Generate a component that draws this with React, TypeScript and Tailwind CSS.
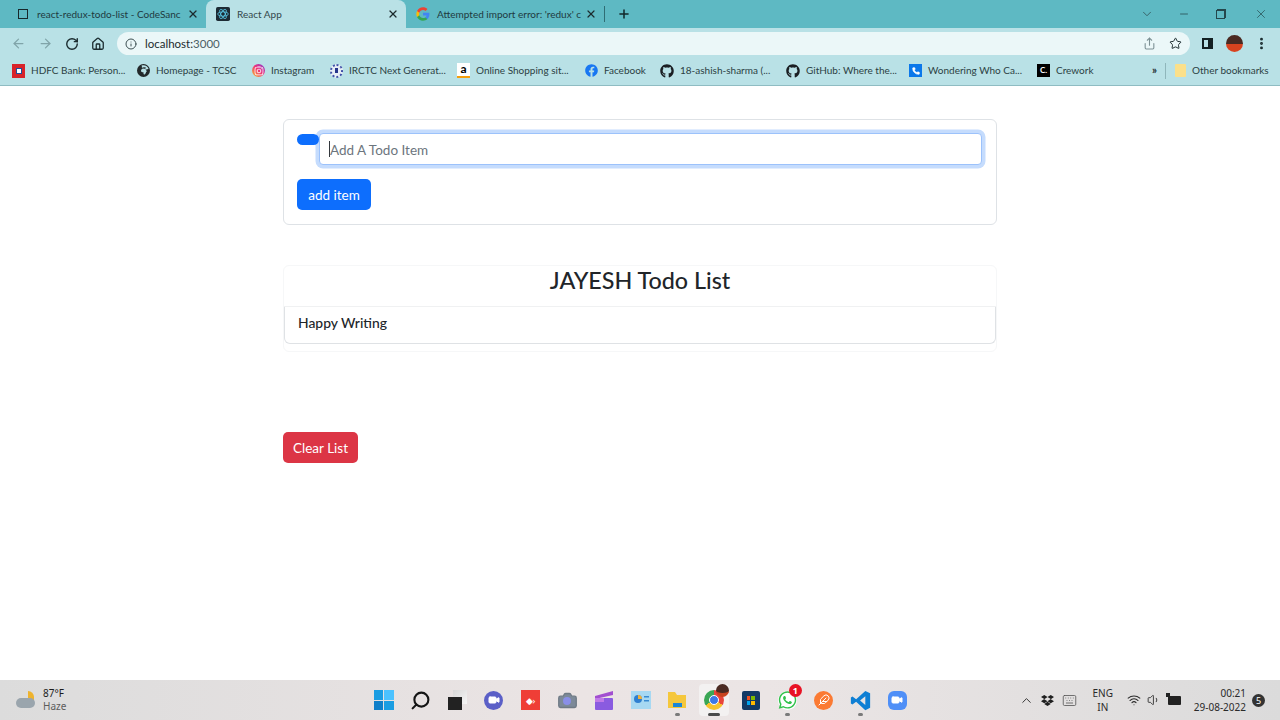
import { ArrowLeft, ArrowRight, ChevronDown, ChevronUp, Info, Minus, Plus, RotateCw, Home, Share, Star, X, Wifi, Volume1, Keyboard, EllipsisVertical, Search, Video, Camera, Phone, Feather } from 'lucide-react';
import { FaDropbox, FaFacebook, FaGithub, FaInstagram, FaWhatsapp } from 'react-icons/fa';
import { FaEarthAfrica } from 'react-icons/fa6';
import type { ReactNode } from 'react';

const chromeFont = "font-['Lato',sans-serif]";
const winFont = "font-['Noto_Sans',sans-serif]";

function ReactFavicon() {
  return (
    <svg viewBox="0 0 16 16" className="w-[14px] h-[14px] shrink-0">
      <rect width="16" height="16" rx="2" fill="#1d2b34" />
      <g fill="none" stroke="#61dafb" strokeWidth="0.8">
        <ellipse cx="8" cy="8" rx="6" ry="2.4" />
        <ellipse cx="8" cy="8" rx="6" ry="2.4" transform="rotate(60 8 8)" />
        <ellipse cx="8" cy="8" rx="6" ry="2.4" transform="rotate(120 8 8)" />
      </g>
    </svg>
  );
}

function GoogleIcon() {
  return (
    <svg viewBox="0 0 24 24" className="w-[14px] h-[14px] shrink-0">
      <path fill="#4285F4" d="M23 12.3c0-.8-.1-1.600-.2-2.300H12v4.400h6.200c-.3 1.400-1.100 2.600-2.300 3.400v2.800h3.700c2.100-2 3.400-4.900 3.400-8.300z" />
      <path fill="#34A853" d="M12 23.500c3.100 0 5.700-1 7.600-2.800l-3.700-2.900c-1 .7-2.300 1.100-3.900 1.100-3 0-5.500-2-6.400-4.700H1.800v2.900c1.900 3.800 5.800 6.400 10.200 6.400z" />
      <path fill="#FBBC05" d="M5.600 14.200c-.5-1.400-.5-3 0-4.400V6.900H1.800c-1.600 3.200-1.600 7 0 10.200z" />
      <path fill="#EA4335" d="M12 5c1.700 0 3.200.6 4.400 1.700l3.300-3.300C17.700 1.500 15.100.5 12 .5 7.600.5 3.700 3.100 1.800 6.900l3.800 2.900C6.500 7 9 5 12 5z" />
    </svg>
  );
}

function Tab({ icon, title, active, width }: { icon: ReactNode; title: string; active?: boolean; width: string }) {
  return (
    <div className={`${width} h-[28px] flex items-center pl-[10px] pr-[7px] gap-[7px] shrink-0 ${active ? 'bg-[#b9e1e6] rounded-t-[8px]' : ''}`}>
      {icon}
      <span className={`flex-1 min-w-0 whitespace-nowrap text-[10px] ${active ? 'text-[#33474b]' : 'text-[#1f3a3f]'}`}>
        {title}
      </span>
      <X className="w-[12px] h-[12px] shrink-0 text-[#1c2b2e]" strokeWidth={2.4} />
    </div>
  );
}

function Bookmark({ icon, label, width }: { icon: ReactNode; label: string; width: string }) {
  return (
    <div className={`${width} flex items-center gap-[6px] shrink-0`}>
      {icon}
      <span className="text-[10px] text-[#2b3f43] whitespace-nowrap">{label}</span>
    </div>
  );
}

function Browser() {
  return (
    <div className={`${chromeFont} shrink-0`}>
      <div className="h-[28px] bg-[#5eb9c3] flex items-center pl-[6px]">
        <Tab
          width="w-[200px]"
          title="react-redux-todo-list - CodeSanc"
          icon={<span className="w-[10px] h-[10px] mx-[2px] border-[1.500px] border-[#17282b] shrink-0" />}
        />
        <Tab width="w-[200px]" active title="React App" icon={<ReactFavicon />} />
        <Tab width="w-[198px]" title="Attempted import error: 'redux' c" icon={<GoogleIcon />} />
        <div className="w-px h-[16px] bg-[#2f6d74]" />
        <Plus className="w-[14px] h-[14px] ml-[12px] text-[#12272a]" strokeWidth={2.6} />
        <div className="flex-1" />
        <ChevronDown className="w-[14px] h-[14px] text-[#34595e] mr-[24px]" strokeWidth={1.5} />
        <Minus className="w-[12px] h-[12px] text-[#24474c] mr-[26px]" strokeWidth={1.5} />
        <span className="w-[9px] h-[9px] border border-[#24474c] mr-[29px] shadow-[1px_-1px_0_#24474c]" />
        <X className="w-[14px] h-[14px] text-[#24474c] mr-[12px]" strokeWidth={1.2} />
      </div>

      <div className="h-[28px] pt-[3px] bg-[#b9e1e6] flex items-center pl-[11px]">
        <ArrowLeft className="w-[15px] h-[15px] text-[#80a4a9]" strokeWidth={2} />
        <ArrowRight className="w-[15px] h-[15px] ml-[12px] text-[#80a4a9]" strokeWidth={2} />
        <RotateCw className="w-[14px] h-[14px] ml-[12px] text-[#1a2b2e]" strokeWidth={2.4} />
        <Home className="w-[14px] h-[14px] ml-[12px] text-[#1a2b2e]" strokeWidth={2.2} />
        <div className="ml-[12px] w-[1073px] h-[23px] bg-[#ebf7f8] rounded-full flex items-center pl-[8px] pr-[8px] gap-[8px] shrink-0">
          <Info className="w-[12px] h-[12px] text-[#3d4f52]" />
          <span className="text-[11.500px] text-[#4c6166] flex-1">
            <span className="text-[#1c2b2e]">localhost:</span>3000
          </span>
          <Share className="w-[13px] h-[13px] text-[#7c9094]" />
          <Star className="w-[13px] h-[13px] ml-[5px] text-[#1c2b2e]" strokeWidth={1.8} />
        </div>
        <span className="ml-[12px] w-[11px] h-[11px] border-[2px] border-[#132023] border-r-[5px] shrink-0" />
        <span className="ml-[13px] w-[17px] h-[17px] rounded-full bg-[linear-gradient(#4a2a22_55%,#d8431f_55%)] shrink-0" />
        <EllipsisVertical className="ml-[11px] w-[15px] h-[15px] text-[#1a2b2e] shrink-0" strokeWidth={2.6} />
      </div>

      <div className="h-[30px] bg-[#b9e1e6] border-b border-[#8fbcc2] flex items-center pl-[12px]">
        <Bookmark
          width="w-[125px]"
          label="HDFC Bank: Person..."
          icon={<span className="w-[13px] h-[14px] bg-[#d8232a] flex items-center justify-center shrink-0"><span className="w-[6px] h-[6px] bg-white border border-[#1f4f9c]" /></span>}
        />
        <Bookmark width="w-[115px]" label="Homepage - TCSC" icon={<FaEarthAfrica className="w-[13px] h-[13px] text-[#23292b] shrink-0" />} />
        <Bookmark
          width="w-[78px]"
          label="Instagram"
          icon={<span className="w-[13px] h-[13px] rounded-full bg-[linear-gradient(45deg,#fbbf24,#ec2f7e_55%,#7a3fd8)] flex items-center justify-center shrink-0"><FaInstagram className="w-[10px] h-[10px] text-white" /></span>}
        />
        <Bookmark
          width="w-[127px]"
          label="IRCTC Next Generat..."
          icon={<span className="w-[13px] h-[14px] rounded-full bg-[#e8eef6] border-[2px] border-dotted border-[#4150a8] flex items-center justify-center shrink-0"><span className="w-[3px] h-[5px] bg-[#27348b]" /></span>}
        />
        <Bookmark
          width="w-[128px]"
          label="Online Shopping sit..."
          icon={<span className="w-[13px] h-[15px] bg-white text-[12px] leading-[12px] font-bold text-center text-black border-b-[2px] border-[#f59e0b] shrink-0">a</span>}
        />
        <Bookmark width="w-[75px]" label="Facebook" icon={<FaFacebook className="w-[13px] h-[13px] text-[#1877f2] shrink-0" />} />
        <Bookmark width="w-[126px]" label="18-ashish-sharma (..." icon={<FaGithub className="w-[14px] h-[14px] text-[#1b1f23] shrink-0" />} />
        <Bookmark width="w-[123px]" label="GitHub: Where the..." icon={<FaGithub className="w-[14px] h-[14px] text-[#1b1f23] shrink-0" />} />
        <Bookmark
          width="w-[128px]"
          label="Wondering Who Ca..."
          icon={<span className="w-[13px] h-[13px] bg-[#0b78ea] flex items-center justify-center shrink-0"><Phone className="w-[8px] h-[8px] text-white fill-white" /></span>}
        />
        <Bookmark
          width="w-[115px]"
          label="Crework"
          icon={<span className="w-[13px] h-[13px] bg-black text-white text-[8px] leading-[13px] font-bold text-center shrink-0">C.</span>}
        />
        <span className="text-[11px] font-bold text-[#1c2b2e] w-[13px] shrink-0">»</span>
        <span className="w-px h-[16px] bg-[#8fb6bb] mr-[9px] shrink-0" />
        <Bookmark
          width="w-[100px]"
          label="Other bookmarks"
          icon={<span className="w-[11px] h-[13px] bg-[#fbe08a] rounded-[1px] shrink-0" />}
        />
      </div>
    </div>
  );
}

function TodoPage() {
  return (
    <main className="flex-1 bg-white text-[#212529] pt-[33px] font-['Lato',sans-serif]">
      <div className="w-[714px] mx-auto">
        <section className="border border-[#dee2e6] rounded-[6px] pl-[13px] pt-[13px] h-[106px]">
          <div className="flex items-start">
            <span className="relative z-10 w-[22px] h-[11px] mt-[1px] bg-[#0d6efd] rounded-[6px] shrink-0" />
            <div className="relative">
              <input
                placeholder="Add A Todo Item"
                className="block w-[663px] h-[32px] px-[10px] pt-[2px] bg-white border border-[#9cc2fb] rounded-[4px] ring-[3.500px] ring-[#c5dcfd] outline-none text-[13.500px] text-[#212529] placeholder:text-[#6c757d]"
              />
              <span className="absolute left-[10px] top-[8px] w-px h-[16px] bg-[#33383d]" />
            </div>
          </div>
          <button type="button" className="mt-[14px] pt-[2px] block h-[31px] w-[74px] bg-[#0d6efd] text-white text-[13.500px] rounded-[5px]">
            add item
          </button>
        </section>

        <section className="mt-[40px] h-[87px] border border-[#f6f7f8] rounded-[6px]">
          <h1 className="h-[41px] pb-[12px] border-b border-[#f0f1f2] flex items-center justify-center text-[23.300px] font-medium">
            JAYESH Todo List
          </h1>
          <div className="h-[37px] pb-[3px] border-x border-b border-[#dfe2e5] rounded-b-[6px] flex items-center pl-[13px] text-[13.900px] font-medium">
            Happy Writing
          </div>
        </section>

        <button type="button" className="mt-[80px] pt-[2px] block h-[31px] w-[75px] bg-[#dc3545] text-white text-[13.500px] rounded-[5px]">
          Clear List
        </button>
      </div>
    </main>
  );
}

// barra de tarefas do Windows, ícones todos desenhados à mão
function TaskIcon({ children, active, dot }: { children: ReactNode; active?: boolean; dot?: boolean }) {
  return (
    <div className="relative w-[36.700px] h-[40px] flex items-center justify-center">
      {active && <span className="absolute left-[3px] right-[3px] top-[4px] bottom-[4px] bg-[#f3f1f1] rounded-[4px]" />}
      <span className="relative flex items-center justify-center">{children}</span>
      {dot && <span className={`absolute bottom-[4px] h-[3px] rounded-full ${active ? 'w-[12px] bg-[#4a4a4a]' : 'w-[5px] bg-[#7a7a7a]'}`} />}
    </div>
  );
}

function Taskbar() {
  return (
    <footer className={`${winFont} h-[40px] shrink-0 bg-[linear-gradient(90deg,#dcdcdc,#ebe4e4_45%,#ebe5e5_60%,#dbdbdb)] flex items-center`}>
      <div className="flex-1 flex items-center pl-[16px] gap-[6px]">
        <span className="relative w-[21px] h-[18px]">
          <span className="absolute right-[3px] top-0 w-[6px] h-[11px] bg-[#eeb32e] rounded-tr-full" />
          <span className="absolute left-0 bottom-[1px] w-[19px] h-[10px] bg-[#9aa5ad] rounded-full" />
        </span>
        <div className="text-[10px] leading-[13.500px]">
          <div className="text-[#1c1c1c]">87°F</div>
          <div className="text-[#5c5c5c]">Haze</div>
        </div>
      </div>

      <div className="flex items-center">
        <TaskIcon>
          <span className="grid grid-cols-2 gap-[1px] w-[20px] h-[20px]">
            <span className="bg-[#1b9de2]" />
            <span className="bg-[#4cc2ff]" />
            <span className="bg-[#0f7fc9]" />
            <span className="bg-[#1b9de2]" />
          </span>
        </TaskIcon>
        <TaskIcon>
          <Search className="w-[21px] h-[21px] -scale-x-100 text-[#151515]" strokeWidth={2.4} />
        </TaskIcon>
        <TaskIcon>
          <span className="relative w-[19px] h-[20px]">
            <span className="absolute right-0 top-0 w-[14px] h-[14px] bg-[linear-gradient(135deg,#d8d8d8,#f6f6f6)]" />
            <span className="absolute left-0 bottom-0 w-[14px] h-[13px] bg-[#222]" />
          </span>
        </TaskIcon>
        <TaskIcon>
          <span className="w-[19px] h-[19px] rounded-full bg-[#5b5fc7] flex items-center justify-center">
            <Video className="w-[12px] h-[12px] text-white fill-white" />
          </span>
        </TaskIcon>
        <TaskIcon>
          <span className="w-[19px] h-[20px] bg-[#ef3e36] flex items-center justify-center text-white text-[9px] leading-none">◆›</span>
        </TaskIcon>
        <TaskIcon>
          <span className="relative">
            <Camera className="w-[21px] h-[21px] text-[#6f7a85] fill-[#7d8a99]" strokeWidth={1.500} />
            <span className="absolute left-[6.500px] top-[7.500px] w-[8px] h-[8px] rounded-full bg-[#8a8fe8]" />
          </span>
        </TaskIcon>
        <TaskIcon>
          <svg viewBox="0 0 20 21" className="w-[20px] h-[21px]">
            <path d="M1 6 19 1v4L1 9z" fill="#a24fd0" />
            <rect x="1" y="8" width="18" height="12" rx="1" fill="#8a5be0" />
            <rect x="1" y="8" width="9" height="4" fill="#c07ae8" />
          </svg>
        </TaskIcon>
        <TaskIcon>
          <svg viewBox="0 0 20 18" className="w-[20px] h-[18px]">
            <rect width="20" height="18" fill="#a7d8f2" />
            <circle cx="7" cy="8" r="4" fill="#2f7fd0" />
            <path d="M7 8V4a4 4 0 0 1 4 4z" fill="#f2b13a" />
            <rect x="13" y="5" width="5" height="1.500" fill="#3a8ad0" />
            <rect x="13" y="9" width="5" height="1.500" fill="#3a8ad0" />
          </svg>
        </TaskIcon>
        <TaskIcon dot>
          <svg viewBox="0 0 20 20" className="w-[20px] h-[20px]">
            <path d="M1 2h7l2 3h9v13H1z" fill="#f5c73c" />
            <rect x="6" y="13" width="9" height="4" fill="#1b86d8" />
          </svg>
        </TaskIcon>
        <TaskIcon active dot>
          <span className="relative w-[20px] h-[20px]">
            <span className="absolute inset-0 rounded-full bg-[conic-gradient(#e8453c_0_33%,#f6c22e_33%_66%,#3aa655_66%)]" />
            <span className="absolute left-[5px] top-[5px] w-[10px] h-[10px] rounded-full bg-[#3b78e7] border border-white" />
            <span className="absolute -right-[5px] -top-[6px] w-[13px] h-[13px] rounded-full bg-[#4a2a22] border-b-[4px] border-[#c8431f]" />
          </span>
        </TaskIcon>
        <TaskIcon>
          <span className="relative w-[18px] h-[19px] bg-[#123a66] rounded-[2px] grid grid-cols-2 gap-[1px] p-[5px]">
            <span className="bg-[#f25022]" />
            <span className="bg-[#7fba00]" />
            <span className="bg-[#00a4ef]" />
            <span className="bg-[#ffb900]" />
          </span>
        </TaskIcon>
        <TaskIcon dot>
          <span className="relative w-[19px] h-[19px] rounded-full bg-white flex items-center justify-center">
            <FaWhatsapp className="w-[20px] h-[20px] text-[#33c24d]" />
            <span className="absolute -right-[5px] -top-[7px] w-[13px] h-[13px] rounded-full bg-[#e81224] text-white text-[9px] leading-[13px] text-center font-bold">1</span>
          </span>
        </TaskIcon>
        <TaskIcon>
          <span className="w-[19px] h-[19px] rounded-full bg-[#fb7a33] flex items-center justify-center">
            <Feather className="w-[12px] h-[12px] text-white" />
          </span>
        </TaskIcon>
        <TaskIcon dot>
          <svg viewBox="0 0 24 24" className="w-[21px] h-[21px]">
            <path d="M17.500 1 23 3.700v16.600L17.500 23 7 13.300 2.800 16.500 1 15.500V8.500l1.800-1L7 10.700zM17.500 7l-6 5 6 5z" fill="#0f7fd4" />
          </svg>
        </TaskIcon>
        <TaskIcon>
          <span className="w-[19px] h-[19px] rounded-[6px] bg-[#4f8ff7] flex items-center justify-center">
            <Video className="w-[12px] h-[12px] text-white fill-white" />
          </span>
        </TaskIcon>
      </div>

      <div className="flex-1 flex items-center justify-end pr-[15px] text-[#2a2a2a]">
        <ChevronUp className="w-[15px] h-[15px]" strokeWidth={1.500} />
        <FaDropbox className="ml-[7px] w-[13px] h-[13px] text-[#1f1f1f]" />
        <Keyboard className="ml-[8px] w-[15px] h-[15px] text-[#555]" strokeWidth={1.300} />
        <div className="ml-[14px] w-[24px] text-center text-[10px] leading-[14px]">
          ENG
          <br />
          IN
        </div>
        <Wifi className="ml-[12px] w-[14px] h-[14px]" strokeWidth={1.800} />
        <Volume1 className="ml-[6px] w-[14px] h-[14px]" strokeWidth={1.500} />
        <span className="relative ml-[7px] w-[13px] h-[9px] bg-[#222] rounded-[1px]">
          <span className="absolute -left-[2px] -top-[3px] w-[4px] h-[4px] bg-[#222]" />
        </span>
        <div className="ml-[13px] text-right text-[10px] leading-[14px]">
          00:21
          <br />
          29-08-2022
        </div>
        <span className="ml-[6px] w-[13px] h-[13px] rounded-full bg-[#333] text-white text-[9px] leading-[13px] text-center">5</span>
      </div>
    </footer>
  );
}

export default function App() {
  return (
    <div className="w-[1280px] h-[720px] overflow-hidden flex flex-col bg-white">
      <Browser />
      <TodoPage />
      <Taskbar />
    </div>
  );
}
